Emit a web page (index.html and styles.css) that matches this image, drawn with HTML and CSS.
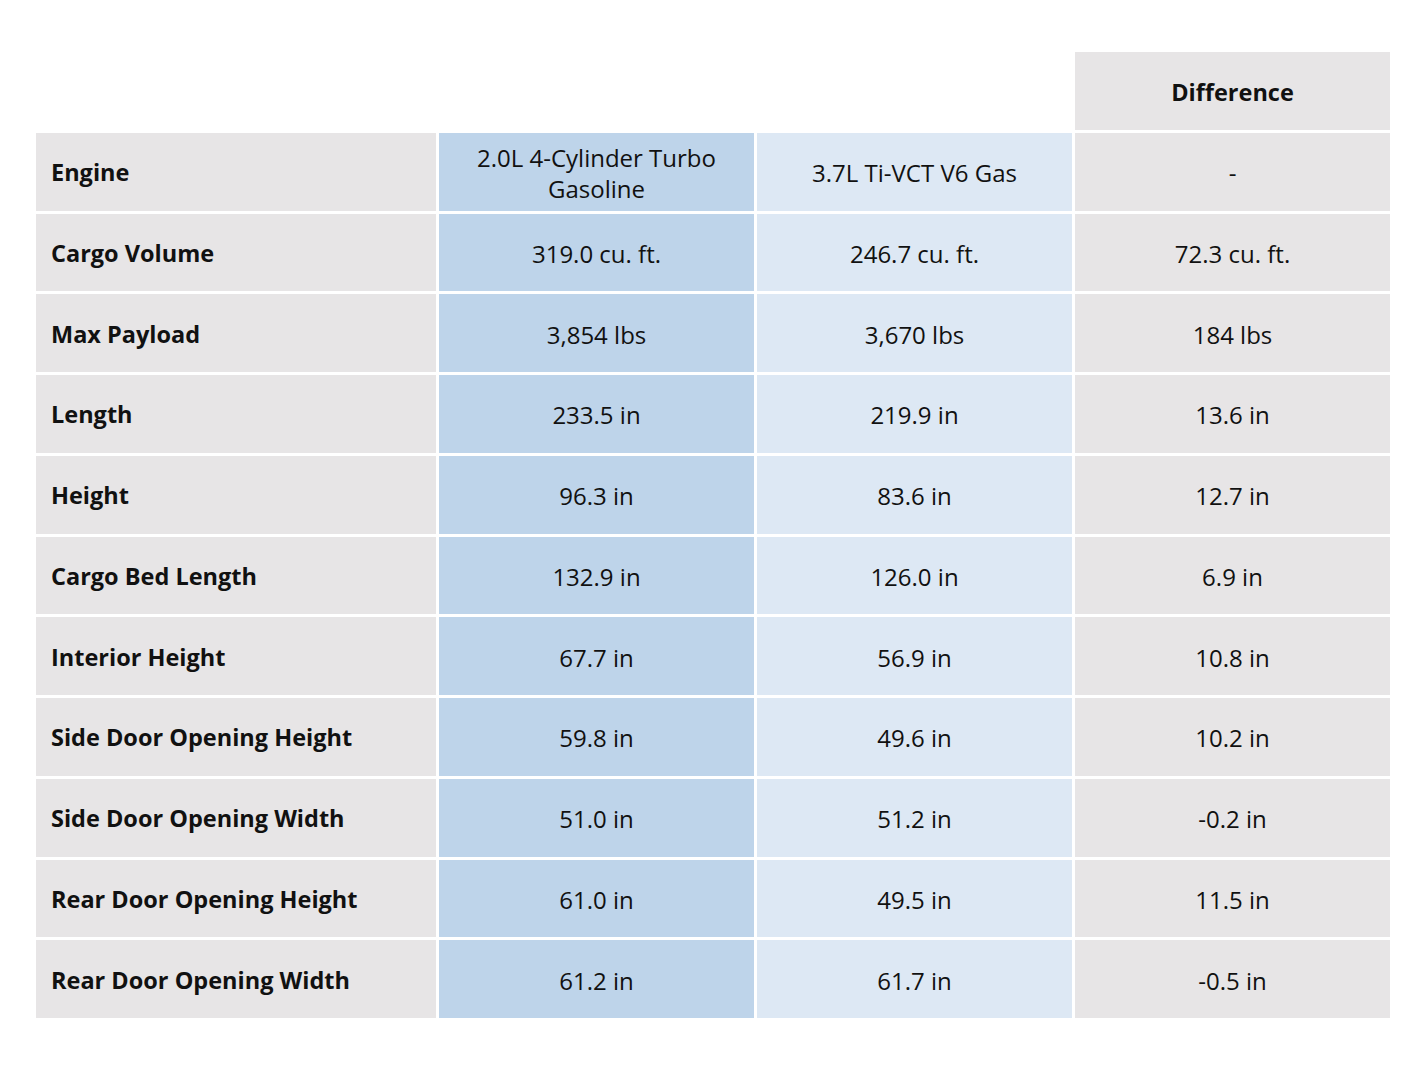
FILE: index.html
```html
<!DOCTYPE html>
<html>
<head>
<meta charset="utf-8">
<link rel="stylesheet" href="styles.css">
</head>
<body>
<div class="table">
  <div class="blank"></div><div class="blank"></div><div class="blank"></div>
  <div class="cell head">Difference</div>

  <div class="cell label">Engine</div>
  <div class="cell c2 two">2.0L 4-Cylinder Turbo<br>Gasoline</div>
  <div class="cell c3">3.7L Ti-VCT V6 Gas</div>
  <div class="cell diff">-</div>

  <div class="cell label">Cargo Volume</div>
  <div class="cell c2">319.0 cu. ft.</div>
  <div class="cell c3">246.7 cu. ft.</div>
  <div class="cell diff">72.3 cu. ft.</div>

  <div class="cell label">Max Payload</div>
  <div class="cell c2">3,854 lbs</div>
  <div class="cell c3">3,670 lbs</div>
  <div class="cell diff">184 lbs</div>

  <div class="cell label">Length</div>
  <div class="cell c2">233.5 in</div>
  <div class="cell c3">219.9 in</div>
  <div class="cell diff">13.6 in</div>

  <div class="cell label">Height</div>
  <div class="cell c2">96.3 in</div>
  <div class="cell c3">83.6 in</div>
  <div class="cell diff">12.7 in</div>

  <div class="cell label">Cargo Bed Length</div>
  <div class="cell c2">132.9 in</div>
  <div class="cell c3">126.0 in</div>
  <div class="cell diff">6.9 in</div>

  <div class="cell label">Interior Height</div>
  <div class="cell c2">67.7 in</div>
  <div class="cell c3">56.9 in</div>
  <div class="cell diff">10.8 in</div>

  <div class="cell label">Side Door Opening Height</div>
  <div class="cell c2">59.8 in</div>
  <div class="cell c3">49.6 in</div>
  <div class="cell diff">10.2 in</div>

  <div class="cell label">Side Door Opening Width</div>
  <div class="cell c2">51.0 in</div>
  <div class="cell c3">51.2 in</div>
  <div class="cell diff">-0.2 in</div>

  <div class="cell label">Rear Door Opening Height</div>
  <div class="cell c2">61.0 in</div>
  <div class="cell c3">49.5 in</div>
  <div class="cell diff">11.5 in</div>

  <div class="cell label">Rear Door Opening Width</div>
  <div class="cell c2">61.2 in</div>
  <div class="cell c3">61.7 in</div>
  <div class="cell diff">-0.5 in</div>
</div>
</body>
</html>
```
FILE: styles.css
```css
html, body {
  margin: 0;
  padding: 0;
  background: #ffffff;
}
body {
  font-family: "Open Sans", "Liberation Sans", sans-serif;
  color: #111111;
}
.table {
  display: grid;
  grid-template-columns: 400px 315px 315px 315px;
  grid-auto-rows: 77.75px;
  gap: 3px;
  margin: 52px 0 0 36px;
  width: 1354px;
}
.cell {
  display: flex;
  align-items: center;
  justify-content: center;
  text-align: center;
  font-size: 24px;
  line-height: 31px;
  padding-top: 2px;
  box-sizing: border-box;
}
.label {
  background: #e7e5e6;
  justify-content: flex-start;
  text-align: left;
  padding-left: 15px;
  font-weight: 700;
  font-size: 23.5px;
}
.head {
  background: #e7e5e6;
  font-weight: 700;
  font-size: 23.5px;
  padding-top: 3px;
}
.c2 {
  background: #bed4ea;
}
.c3 {
  background: #dde8f4;
}
.diff {
  background: #e7e5e6;
}
```
